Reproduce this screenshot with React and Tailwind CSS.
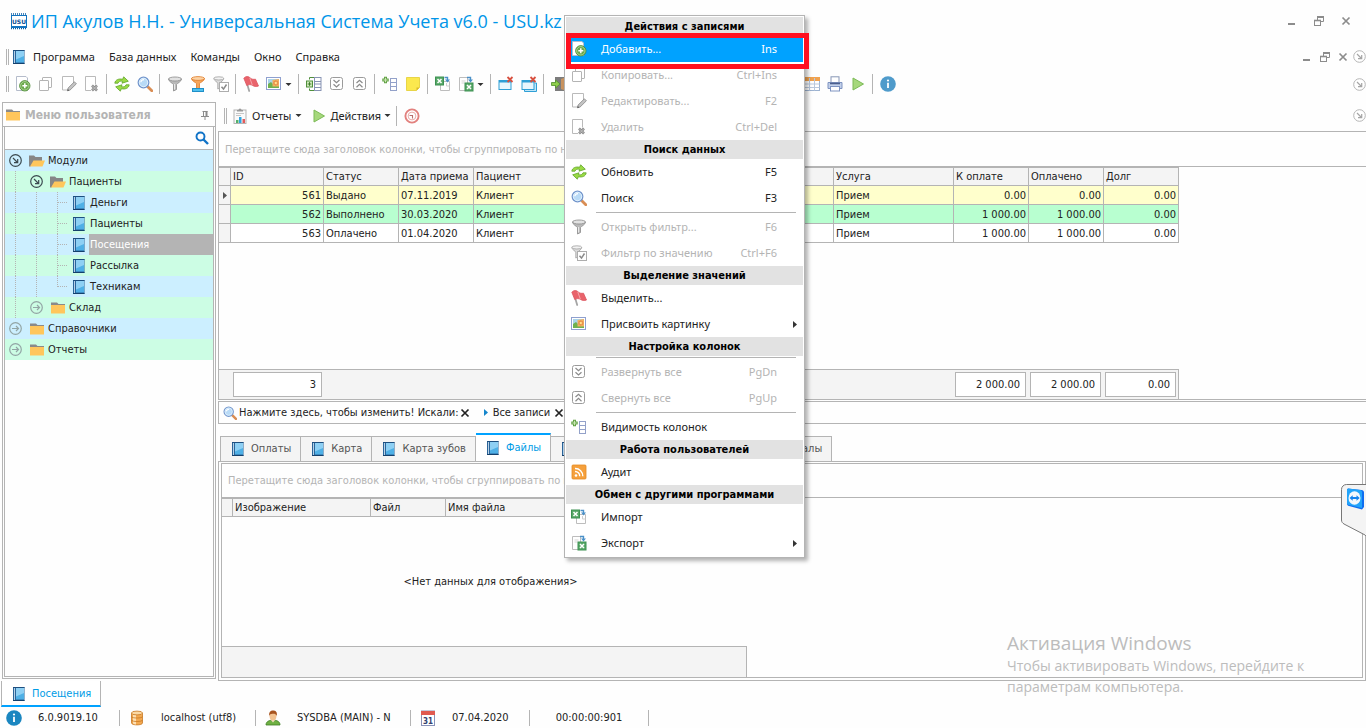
import React from "react";

/* ---------- icons (16px grid) ---------- */

function Svg({ children, size = 16, box = 16, className = "" }) {
  return (
    <svg width={size} height={size} viewBox={`0 0 ${box} ${box}`} fill="none" aria-hidden="true" className={`shrink-0 ${className}`}>
      {children}
    </svg>
  );
}

const BookIcon = ({ size = 16 }) => (
  <Svg size={size}>
    <path d="M2 1h11.500v14H2z" fill="#2a6499" />
    <path d="M5 2h8v11.500H5z" fill="#4fb0e6" />
    <path d="M5 2h8v5l-8 3.500z" fill="#8ed0f4" />
    <path d="M3.500 2v12" stroke="#b8d2e8" />
    <path d="M2 14.500h11.500" stroke="#14406c" />
    <path d="M2 1.500h11.500" stroke="#1d4f80" />
  </Svg>
);

const AddIcon = () => (
  <Svg>
    <path d="M1.500 .5h9.500l1.500 1.500v12.500h-11z" fill="#fff" stroke="#b5bccb" />
    <circle cx="9.800" cy="9.800" r="5.200" fill="#6aa84a" stroke="#4b8a32" strokeWidth=".8" />
    <circle cx="9.800" cy="9.800" r="4.200" stroke="#b9dda2" strokeWidth=".8" />
    <path d="M9.800 7.300v5M7.300 9.800h5" stroke="#fff" strokeWidth="1.500" />
  </Svg>
);

const CopyIcon = () => (
  <Svg>
    <rect x="4.500" y="1.500" width="9" height="10" rx=".5" fill="#fff" stroke="#b4b4b4" />
    <rect x="1.500" y="4.500" width="9" height="10" rx=".5" fill="#fff" stroke="#b4b4b4" />
  </Svg>
);

const EditIcon = () => (
  <Svg>
    <path d="M1.500 .5h11v9l-5 4.500h-6z" fill="#fff" stroke="#bababa" />
    <path d="M6.500 14.800l.6-2.800 6.300-6.200 2 2-6.400 6.300z" fill="#c4c4c4" stroke="#858585" strokeWidth=".8" />
    <path d="M6.400 15l1.800-.6-1.300-1.300z" fill="#555" />
  </Svg>
);

const DeleteIcon = () => (
  <Svg>
    <path d="M1.500 .5h10v8M7 14.500H1.500V.5" fill="#fff" stroke="#bababa" />
    <path d="M8 9.500l5 5M13 9.500l-5 5" stroke="#8c8c8c" strokeWidth="2.600" />
    <path d="M8.300 9.800l4.500 4.500M12.800 9.800l-4.500 4.500" stroke="#d5d5d5" strokeWidth=".7" />
  </Svg>
);

const RefreshIcon = () => (
  <Svg>
    <path d="M.8 7.200C1.300 3.600 5 2.400 8.600 3.300L9.700.8l4.600 4.400-6.300 2 .6-1.800C6.400 4.700 4.700 5.200 4 7.200z" fill="#9bdb45" stroke="#5fa52a" strokeWidth=".8" strokeLinejoin="round" />
    <path d="M15.200 8.800c-.5 3.600-4.200 4.800-7.800 3.900l-1.100 2.500-4.600-4.400 6.300-2-.6 1.800c2.200.7 3.900.2 4.600-1.800z" fill="#9bdb45" stroke="#5fa52a" strokeWidth=".8" strokeLinejoin="round" />
  </Svg>
);

const SearchIcon = ({ size = 16 }) => (
  <Svg size={size}>
    <path d="M10.800 10.800l4 4" stroke="#d98d54" strokeWidth="2.800" strokeLinecap="round" />
    <circle cx="6.500" cy="6.500" r="5.300" fill="#b8daf6" stroke="#7396cc" strokeWidth="1.300" />
    <circle cx="6.500" cy="6.500" r="4.200" stroke="#eaf5fd" strokeWidth=".8" />
    <path d="M3.800 6.200C4 4.500 5.300 3.700 7 3.600" stroke="#fff" strokeWidth="1.200" />
  </Svg>
);

const FunnelIcon = () => (
  <Svg>
    <path d="M1.500 3c0 2.500 4.500 4.500 5 5.500v6.500l3-1.500v-5c.5-1 5-3 5-5.500z" fill="#b9b9b9" stroke="#8a8a8a" strokeWidth=".8" />
    <ellipse cx="8" cy="3" rx="6.500" ry="2" fill="#e2e2e2" stroke="#8a8a8a" strokeWidth=".8" />
    <path d="M7.600 8v5.500" stroke="#eee" />
  </Svg>
);

const FunnelOrangeIcon = () => (
  <Svg>
    <path d="M1.500 2.500c0 2.500 4.500 4 5 5v5h3v-5c.5-1 5-2.500 5-5z" fill="#f6a55a" stroke="#e07b28" strokeWidth=".8" />
    <ellipse cx="8" cy="2.500" rx="6.500" ry="1.900" fill="#fcd3a5" stroke="#e07b28" strokeWidth=".8" />
    <rect x="2.500" y="12.500" width="11" height="3" fill="#4fc0ee" stroke="#1f8fc8" />
  </Svg>
);

const FunnelCheckIcon = () => (
  <Svg>
    <path d="M.8 2.500c0 2 3.500 3.500 4 4.500v6l2-1v-5c.5-1 4-2.500 4-4.500z" fill="#dcdcdc" stroke="#a0a0a0" strokeWidth=".8" />
    <ellipse cx="5.800" cy="2.400" rx="5" ry="1.600" fill="#f2f2f2" stroke="#a0a0a0" strokeWidth=".8" />
    <rect x="6.500" y="6.500" width="9" height="9" fill="#fff" stroke="#adadad" />
    <path d="M8.500 10.800l2 2.300 3-4.600" stroke="#8a8a8a" strokeWidth="1.500" />
  </Svg>
);

const FlagIcon = () => (
  <Svg>
    <path d="M3.600 6l2.600 9" stroke="#a5a5a5" strokeWidth="1.800" strokeLinecap="round" />
    <path d="M.8 2.200C3-.2 5.500.4 7 1.800c1.500 1.400 3.500 1.800 5.500 1.400L15.500 10c-2.500 1-4.500.4-6-.6-1.600-1-3.600-1.200-5.700.2z" fill="#e9636b" stroke="#dc5660" strokeWidth=".8" strokeLinejoin="round" />
    <path d="M6.800 2l2.500 7" stroke="#f5a5aa" strokeWidth="1" />
  </Svg>
);

const ImageIcon = () => (
  <Svg>
    <rect x=".5" y="1.500" width="14" height="12" fill="#fff" stroke="#8fa0cf" />
    <rect x="2" y="3" width="11" height="9" fill="#a8d4ea" />
    <path d="M2 12V8l3-2 3 3 2-1 3 2v2z" fill="#6fb04e" />
    <path d="M6.500 10.500V4l6.500-1v7.500z" fill="#f0b060" />
    <path d="M9.800 4.500v5M7.300 7h5M8 5.200l3.500 3.500M11.500 5.200L8 8.700" stroke="#df6a35" strokeWidth=".8" />
    <circle cx="9.800" cy="7" r="1.200" fill="#ffe08a" />
  </Svg>
);

const ExpandTableIcon = () => (
  <Svg>
    <path d="M3.500 3.500v-2h5M3.500 12.500v2h5" stroke="#4f8f3a" />
    <rect x=".5" y="5" width="6" height="6" fill="#cfe8bb" stroke="#4f8f3a" />
    <path d="M3.500 6.200v3.600M1.700 8h3.600" stroke="#3b7a26" />
    <rect x="8.500" y="1.500" width="6.500" height="13" fill="#fff" stroke="#8793b3" />
    <path d="M8.500 5.500H15M8.500 8H15M8.500 11.500H15" stroke="#8793b3" />
  </Svg>
);

const ExpandAllIcon = () => (
  <Svg>
    <rect x="1.500" y="1.500" width="12" height="12" rx="2" fill="#fff" stroke="#9b9b9b" />
    <path d="M4.500 4l3 2.800 3-2.800M4.500 8.200l3 2.800 3-2.800" stroke="#8a8a8a" strokeWidth="1.200" />
  </Svg>
);

const CollapseAllIcon = () => (
  <Svg>
    <rect x="1.500" y="1.500" width="12" height="12" rx="2" fill="#fff" stroke="#9b9b9b" />
    <path d="M4.500 7l3-2.800 3 2.800M4.500 11.200l3-2.800 3 2.800" stroke="#8a8a8a" strokeWidth="1.200" />
  </Svg>
);

const ColumnsIcon = () => (
  <Svg>
    <path d="M3.500 .8v6.400M.3 4h6.400" stroke="#5f9f42" strokeWidth="3" />
    <path d="M3.500 1.800v4.400M1.300 4h4.400" stroke="#c9e6b3" strokeWidth="1.200" />
    <rect x="8.500" y="2.500" width="6" height="12" fill="#fff" stroke="#93a1c9" />
    <path d="M8.500 6.500h6M8.500 10.500h6" stroke="#93a1c9" />
  </Svg>
);

const NoteIcon = () => (
  <Svg>
    <path d="M1.500 1.500h13v10l-3 3h-10z" fill="#fbe84e" stroke="#e8d548" />
    <path d="M14.500 11.500h-3v3z" fill="#d9b82a" />
  </Svg>
);

const ImportIcon = () => (
  <Svg>
    <path d="M5.500 5.500h9v9h-9z" fill="#fff" stroke="#bdbdbd" />
    <path d="M11.500 7v3h3" stroke="#cfcfcf" />
    <rect x=".5" y="1" width="8" height="8" fill="#58a868" stroke="#3d9152" />
    <path d="M2.500 3l4 4M6.500 3l-4 4" stroke="#fff" strokeWidth="1.500" />
    <path d="M9.500 1.500h3v2.500" stroke="#4a90c8" strokeWidth="1.400" />
    <path d="M10 3.500h5L12.500 6.500z" fill="#4a90c8" />
  </Svg>
);

const ExportIcon = () => (
  <Svg>
    <path d="M1.500 1.500h8v13h-8z" fill="#fff" stroke="#bdbdbd" />
    <path d="M3.500 5h4M3.500 7h3" stroke="#d5d5d5" />
    <rect x="7" y="7" width="8" height="8" fill="#58a868" stroke="#3d9152" />
    <path d="M9 9l4 4M13 9l-4 4" stroke="#fff" strokeWidth="1.500" />
    <path d="M9 1.500h3.500V4" stroke="#4a90c8" strokeWidth="1.400" />
    <path d="M10 3.500h5L12.500 6.500z" fill="#4a90c8" />
  </Svg>
);

const CloseWindowIcon = ({ many = false }) => (
  <Svg>
    {many && <path d="M3.500 12v3.500h12V7h-2" fill="#bfe6f8" stroke="#2f9fd6" />}
    <rect x="1" y="4.500" width="12" height="9" fill="#e8f6fd" stroke="#2f9fd6" />
    <path d="M1 5.500h12" stroke="#2f9fd6" strokeWidth="2" />
    <path d="M9.500 1l5 5M14.500 1l-5 5" stroke="#d8503f" strokeWidth="1.800" />
  </Svg>
);

const DoorIcon = () => (
  <Svg>
    <rect x="4" y="1" width="11" height="14" fill="#7c7c7c" />
    <path d="M10 3l5-2v14l-5-2z" fill="#c99360" />
    <path d="M.5 6.500h4v-2.500l4.500 4-4.500 4v-2.500h-4z" fill="#8fce4b" stroke="#4f8f2c" strokeWidth=".8" />
  </Svg>
);

const TableIcon = () => (
  <Svg>
    <rect x=".5" y="1.500" width="15" height="13" fill="#fff" stroke="#9db3d1" />
    <rect x="0" y="1" width="16" height="4" fill="#f0a24f" />
    <path d="M.5 8h15M.5 11.500h15M5.500 2v12.500M10.500 2v12.500" stroke="#b9c8dd" />
  </Svg>
);

const PrinterIcon = () => (
  <Svg>
    <rect x="4" y=".8" width="8" height="6" fill="#fff" stroke="#8796b5" />
    <path d="M1 6.500h14v6H1z" fill="#c2d0ea" stroke="#7e93c0" />
    <path d="M3 7.500h10" stroke="#4c5f8d" strokeWidth="1.600" />
    <rect x="3.500" y="10.500" width="9" height="4.500" fill="#fff" stroke="#7e93c0" />
  </Svg>
);

const PlayIcon = () => (
  <Svg>
    <path d="M3 2l10.500 6L3 14z" fill="#a6d87c" stroke="#7cba57" strokeLinejoin="round" />
  </Svg>
);

const InfoIcon = ({ color = "#4f9bcb" }) => (
  <Svg>
    <circle cx="8" cy="8" r="7.800" fill={color} />
    <circle cx="8" cy="4.500" r="1.100" fill="#fff" />
    <path d="M8 6.800v5.200" stroke="#fff" strokeWidth="1.800" />
  </Svg>
);

const RssIcon = () => (
  <Svg>
    <rect x="1" y="1" width="14" height="14" rx="1" fill="#f5a03c" stroke="#e58a22" strokeWidth=".8" />
    <circle cx="5" cy="11.500" r="1.300" fill="#fff" />
    <path d="M4 7.500a4.500 4.500 0 0 1 4.700 4.800M4 4.500a7.500 7.500 0 0 1 7.800 7.800" stroke="#fff" strokeWidth="1.400" />
  </Svg>
);

const ReportIcon = () => (
  <Svg>
    <rect x="2" y="2" width="12" height="13.500" fill="#fafafa" stroke="#b3b3b3" />
    <path d="M5 3.500V2h1.500a1.500 1.500 0 0 1 3 0H11v1.500z" fill="#9a9a9a" />
    <path d="M4 5.500h8M4 7.500h5" stroke="#c6c6c6" />
    <path d="M4 12h2.500v3H4z" fill="#55b06a" />
    <path d="M7 9h2.500v6H7z" fill="#2fa5df" />
    <path d="M10.500 11H13v4h-2.500z" fill="#e35c5c" />
  </Svg>
);

const ClockIcon = () => (
  <Svg>
    <circle cx="8" cy="8" r="6.600" fill="#fff" stroke="#e2817e" strokeWidth="1.900" />
    <circle cx="8" cy="8" r="3.900" stroke="#e8a29f" strokeWidth=".9" />
    <path d="M5.500 7.500h3v3" stroke="#b86e6c" strokeWidth="1.100" />
  </Svg>
);

const FolderIcon = () => (
  <Svg>
    <path d="M1 2.500h6L8.500 4H15v2.500H1z" fill="#8a8a8a" />
    <path d="M1 5h14v8.500H1z" fill="#ffc65c" />
  </Svg>
);

const FolderOpenIcon = () => (
  <Svg>
    <path d="M0 2.500h5L6.500 4H13v5H5l-3.500 4.500H0z" fill="#868686" />
    <path d="M4.500 7.500H16l-2.500 6H1z" fill="#ffc65c" />
  </Svg>
);

const PinIcon = () => (
  <Svg size={10} box={10}>
    <path d="M2.500 1.500h5M3.500 1v5M1 6.500h8M5 6.500V10" stroke="#8c8c8c" />
    <path d="M6.500 1v5" stroke="#8c8c8c" strokeWidth="2" />
  </Svg>
);

const DatabaseIcon = () => (
  <Svg>
    <path d="M2.500 3v10c0 2.500 11 2.500 11 0V3z" fill="#f3a951" stroke="#c87a26" strokeWidth=".8" />
    <path d="M4 4v9.500c1 .6 2 .8 3 .9V5z" fill="#fde0b3" />
    <ellipse cx="8" cy="3" rx="5.500" ry="1.900" fill="#fbd9a4" stroke="#c87a26" strokeWidth=".8" />
    <path d="M2.500 6.500c0 2 11 2 11 0M2.500 10c0 2 11 2 11 0" stroke="#c87a26" strokeWidth=".8" />
  </Svg>
);

const UserIcon = () => (
  <Svg>
    <path d="M1 15c0-3.500 3-4.800 7-4.800s7 1.300 7 4.800z" fill="#6fb043" stroke="#3f7f24" strokeWidth=".8" />
    <path d="M6 10l2 2.500L10 10z" fill="#f7e0c4" />
    <ellipse cx="8" cy="6.200" rx="3.400" ry="4.200" fill="#f3c391" />
    <path d="M4.200 6C3.800 2 5.500.6 8 .6s4.500 1.200 3.800 5.400C11 4 9.500 3.600 7.500 3.800 5.500 4 4.800 4.500 4.200 6z" fill="#a8541f" />
  </Svg>
);

const CalendarIcon = () => (
  <svg width="16" height="16" viewBox="0 0 16 16" aria-hidden="true" className="shrink-0">
    <rect x="1.500" y="1" width="13" height="14.500" fill="#fff" stroke="#8b93b8" />
    <rect x="1" y="1" width="14" height="4" fill="#e05a50" />
    <text x="8" y="13.500" textAnchor="middle" fontSize="8" fontWeight="700" fontFamily="DejaVu Sans Condensed" fill="#333f70">31</text>
  </svg>
);

const LogoIcon = () => (
  <svg width="16" height="17" viewBox="0 0 16 17" aria-hidden="true" className="shrink-0">
    <path d="M0 1h16M0 15.500h16" stroke="#0b5fa8" strokeWidth="1.500" strokeDasharray="1 1" />
    <rect x="0" y="2" width="16" height="13" fill="#1273bf" />
    <rect x="1" y="3" width="14" height="10" fill="#fff" />
    <text x="8" y="10.500" textAnchor="middle" fontSize="6" fontWeight="700" fontFamily="DejaVu Sans" fill="#0b4f95">USU</text>
  </svg>
);

const ToggleIcon = ({ open }) => (
  <Svg size={13} box={13}>
    <circle cx="6.500" cy="6.500" r="5.800" stroke={open ? "#3c4a50" : "#93a5a5"} strokeWidth="1.200" />
    {open ? (
      <path d="M4 4l4.500 4.500M8.700 5v3.700H5" stroke="#3c4a50" strokeWidth="1.200" />
    ) : (
      <path d="M3 6.500h6.500M7 4l2.500 2.500L7 9" stroke="#93a5a5" strokeWidth="1.200" />
    )}
  </Svg>
);

const CornerIcon = () => (
  <Svg size={13} box={13}>
    <circle cx="6.500" cy="6.500" r="5.800" fill="#fff" stroke="#b5b5b5" />
    <path d="M4 4l4.500 4.500M8.700 5v3.700H5" stroke="#a5a5a5" strokeWidth="1.200" />
  </Svg>
);

const MinimizeIcon = () => (
  <Svg size={10} box={10}>
    <path d="M1 8h7" stroke="#8c8c8c" strokeWidth="2" />
  </Svg>
);
const RestoreIcon = () => (
  <Svg size={10} box={10}>
    <path d="M3.500 4V1M9.500 1v4.500H7" stroke="#8c8c8c" />
    <path d="M3 1h7" stroke="#8c8c8c" strokeWidth="2" />
    <rect x=".5" y="4.500" width="6" height="5" fill="#fefefe" stroke="#8c8c8c" />
    <path d="M0 4.500h7" stroke="#8c8c8c" strokeWidth="1.600" />
  </Svg>
);
const CrossIcon = ({ color = "#8c8c8c" }) => (
  <Svg size={10} box={10}>
    <path d="M1.500 1.500l7 7M8.500 1.500l-7 7" stroke={color} strokeWidth="1.700" />
  </Svg>
);

const Arrow = ({ dir = "down", color = "#333" }) => (
  <Svg size={7} box={7}>
    <path d={dir === "down" ? "M.5 2h6L3.500 5z" : "M2 0v7L6 3.500z"} fill={color} />
  </Svg>
);

/* ---------- small parts ---------- */

const Grip = () => <span className="mr-[2px] h-4 w-[3px] shrink-0 border-x border-[#b4b4b4]" />;
const Divider = () => (
  <span className="flex w-[7px] shrink-0 justify-center">
    <span className="h-5 w-px bg-[#b4b4b4]" />
  </span>
);
const Tool = ({ label, children }) => (
  <button type="button" aria-label={label} className="flex h-6 w-[23px] shrink-0 items-center justify-center">
    {children}
  </button>
);
const DropTool = ({ label, children }) => (
  <button type="button" aria-label={label} className="flex h-6 w-[33px] shrink-0 items-center justify-center gap-[3px]">
    {children}
    <Arrow />
  </button>
);
const WindowButtons = ({ gap }) => (
  <span className={`flex items-center ${gap}`}>
    <button type="button" aria-label="Свернуть окно"><MinimizeIcon /></button>
    <button type="button" aria-label="Восстановить окно"><RestoreIcon /></button>
    <button type="button" aria-label="Закрыть окно"><CrossIcon /></button>
  </span>
);
const CornerButton = () => (
  <button type="button" aria-label="Настройка панели" className="shrink-0"><CornerIcon /></button>
);

/* ---------- toolbar ---------- */

const Toolbar = () => (
  <div className="flex h-7 shrink-0 items-center pl-[6px]">
    <Grip />
    <Tool label="Добавить"><AddIcon /></Tool>
    <Tool label="Копировать"><CopyIcon /></Tool>
    <Tool label="Редактировать"><EditIcon /></Tool>
    <Tool label="Удалить"><DeleteIcon /></Tool>
    <Divider />
    <Tool label="Обновить"><RefreshIcon /></Tool>
    <Tool label="Поиск"><SearchIcon /></Tool>
    <Divider />
    <Tool label="Фильтр"><FunnelIcon /></Tool>
    <Tool label="Сбросить фильтр"><FunnelOrangeIcon /></Tool>
    <Tool label="Фильтр по значению"><FunnelCheckIcon /></Tool>
    <Divider />
    <Tool label="Выделить"><FlagIcon /></Tool>
    <DropTool label="Присвоить картинку"><ImageIcon /></DropTool>
    <Divider />
    <Tool label="Группы"><ExpandTableIcon /></Tool>
    <Tool label="Развернуть все"><ExpandAllIcon /></Tool>
    <Tool label="Свернуть все"><CollapseAllIcon /></Tool>
    <Divider />
    <Tool label="Видимость колонок"><ColumnsIcon /></Tool>
    <Tool label="Заметка"><NoteIcon /></Tool>
    <Divider />
    <Tool label="Импорт"><ImportIcon /></Tool>
    <DropTool label="Экспорт"><ExportIcon /></DropTool>
    <Divider />
    <Tool label="Закрыть"><CloseWindowIcon /></Tool>
    <Tool label="Закрыть все"><CloseWindowIcon many /></Tool>
    <Divider />
    <Tool label="Выход"><DoorIcon /></Tool>
    <span className="w-[230px] shrink-0" />
    <Tool label="Таблица"><TableIcon /></Tool>
    <Tool label="Печать"><PrinterIcon /></Tool>
    <Tool label="Выполнить"><PlayIcon /></Tool>
    <Divider />
    <Tool label="О программе"><InfoIcon /></Tool>
    <span className="grow" />
    <CornerButton />
  </div>
);

/* ---------- sidebar ---------- */

const tree = [
  { level: 0, label: "Модули", kind: "open" },
  { level: 1, label: "Пациенты", kind: "open" },
  { level: 2, label: "Деньги", kind: "leaf" },
  { level: 2, label: "Пациенты", kind: "leaf" },
  { level: 2, label: "Посещения", kind: "leaf", selected: true },
  { level: 2, label: "Рассылка", kind: "leaf" },
  { level: 2, label: "Техникам", kind: "leaf", last: true },
  { level: 1, label: "Склад", kind: "closed", last: true },
  { level: 0, label: "Справочники", kind: "closed" },
  { level: 0, label: "Отчеты", kind: "closed" },
];

const Guide = ({ branch = false, half = false }) => (
  <svg width="21" height="21" viewBox="0 0 21 21" className="shrink-0" aria-hidden="true">
    <path d={half ? "M10.500 0V11" : "M10.500 0V21"} stroke="#b4b4b4" strokeDasharray="1 1" />
    {branch && <path d="M11 10.500H21" stroke="#b4b4b4" strokeDasharray="1 1" />}
  </svg>
);

const TreeRow = ({ node }) => (
  <li className="flex h-[21px] items-center odd:bg-[#ccefff] even:bg-[#ccfde4]">
    {node.level > 0 && <Guide />}
    {node.level > 1 && <Guide />}
    {node.kind === "leaf" ? (
      <Guide branch half={node.last} />
    ) : (
      <button type="button" aria-label={node.label} className="flex w-[21px] shrink-0 justify-center">
        <ToggleIcon open={node.kind === "open"} />
      </button>
    )}
    <span className="flex w-[21px] shrink-0 justify-center">
      {node.kind === "leaf" ? <BookIcon /> : node.kind === "open" ? <FolderOpenIcon /> : <FolderIcon />}
    </span>
    <a href="#" className={`flex h-full grow items-center pl-px ${node.selected ? "bg-[#b4b4b4] text-white" : ""}`}>
      {node.label}
    </a>
  </li>
);

const Sidebar = () => (
  <aside className="mb-[2px] ml-[2px] flex w-[214px] shrink-0 flex-col border border-[#b4b4b4]">
    <header className="flex h-6 shrink-0 items-center gap-1 border-b border-[#b4b4b4] pl-[2px] pr-[5px]">
      <FolderIcon />
      <h2 className="grow text-[12px] font-bold text-[#b4b4b4]">Меню пользователя</h2>
      <button type="button" aria-label="Закрепить"><PinIcon /></button>
    </header>
    <div className="m-px mt-0 flex grow flex-col border border-t-0 border-[#b4b4b4]">
      <label className="flex h-[23px] shrink-0 items-center border-b border-[#b4b4b4] pr-1">
        <input aria-label="Поиск по меню" className="min-w-0 grow outline-none" />
        <Svg size={14} box={14}>
          <circle cx="5.500" cy="5.500" r="4" stroke="#1173c7" strokeWidth="1.900" />
          <path d="M8.500 8.500l4.500 4.500" stroke="#1173c7" strokeWidth="2.400" />
        </Svg>
      </label>
      <ul>{tree.map((n, i) => <TreeRow key={i} node={n} />)}</ul>
    </div>
  </aside>
);

/* ---------- visits grid ---------- */

const visits = [
  { id: "561", status: "Выдано", date: "07.11.2019", due: "0.00", paid: "0.00", debt: "0.00", bg: "bg-[#ffffcc]" },
  { id: "562", status: "Выполнено", date: "30.03.2020", due: "1 000.00", paid: "1 000.00", debt: "0.00", bg: "bg-[#b8ffd0]" },
  { id: "563", status: "Оплачено", date: "01.04.2020", due: "1 000.00", paid: "1 000.00", debt: "0.00", bg: "bg-white" },
];

const cell = "truncate border-b border-r border-[#b4b4b4] font-normal";
const headCell = `${cell} h-[18px] px-[2px] pt-px`;
const bodyCell = `${cell} h-[19px] px-[2px] pt-px`;

const VisitsTable = () => (
  <table className="w-[960px] table-fixed border-separate border-spacing-0 border-t border-[#b4b4b4]">
    <colgroup>
      <col className="w-[12px]" />
      <col className="w-[93px]" />
      <col className="w-[75px]" />
      <col className="w-[75px]" />
      <col />
      <col className="w-[120px]" />
      <col className="w-[75px]" />
      <col className="w-[75px]" />
      <col className="w-[75px]" />
    </colgroup>
    <thead className="bg-[#f4f4f4] text-left">
      <tr>
        {["", "ID", "Статус", "Дата приема", "Пациент", "Услуга", "К оплате", "Оплачено", "Долг"].map((h) => (
          <th key={h} scope="col" className={headCell}>{h}</th>
        ))}
      </tr>
    </thead>
    <tbody>
      {visits.map((v, i) => (
        <tr key={v.id} className={v.bg}>
          <td className="border-b border-r border-[#b4b4b4] bg-[#f4f4f4] pl-[2px]">{i === 0 && <Arrow dir="right" color="#555" />}</td>
          <td className={`${bodyCell} text-right`}>{v.id}</td>
          <td className={bodyCell}>{v.status}</td>
          <td className={bodyCell}>{v.date}</td>
          <td className={bodyCell}>Клиент</td>
          <td className={bodyCell}>Прием</td>
          <td className={`${bodyCell} text-right`}>{v.due}</td>
          <td className={`${bodyCell} text-right`}>{v.paid}</td>
          <td className={`${bodyCell} text-right`}>{v.debt}</td>
        </tr>
      ))}
    </tbody>
  </table>
);

const Total = ({ children, width }) => (
  <output className={`flex h-[25px] items-center justify-end border border-[#b4b4b4] bg-white pr-[5px] ${width}`}>{children}</output>
);

const GroupHint = ({ size }) => (
  <p className={`flex shrink-0 items-center whitespace-nowrap border-b border-[#b4b4b4] pl-[6px] text-[#b4b4b4] ${size}`}>
    Перетащите сюда заголовок колонки, чтобы сгруппировать по ней
  </p>
);

const Tab = ({ label, active }) => (
  <button
    type="button"
    role="tab"
    aria-selected={!!active}
    className={`flex items-center gap-[5px] border-r border-[#b4b4b4] px-[9px] ${
      active ? "h-7 border-t-2 border-t-[#00a2ff] bg-white text-[#009ce6]" : "h-[25px] border-t bg-[#f4f4f4] text-[#555]"
    }`}
  >
    <BookIcon />
    {label}
  </button>
);

const Content = () => (
  <main className="ml-[2px] flex min-w-0 grow flex-col">
    <div className="mb-[2px] flex h-[27px] shrink-0 items-center pl-[6px] font-['Noto_Sans']">
      <Grip />
      <button type="button" className="ml-[2px] flex items-center gap-1 px-px"><ReportIcon />Отчеты <Arrow /></button>
      <button type="button" className="ml-2 flex items-center gap-[3px]"><PlayIcon />Действия <Arrow /></button>
      <span className="w-[2px]" />
      <Divider />
      <Tool label="История"><ClockIcon /></Tool>
      <span className="grow" />
      <CornerButton />
    </div>

    <section aria-label="Посещения" className="flex h-[269px] shrink-0 flex-col border border-r-0 border-[#b4b4b4]">
      <GroupHint size="h-[35px] pt-[2px]" />
      <VisitsTable />
      <div className="grow" />
      <div className="flex h-[30px] w-[960px] items-center border-r border-t border-[#b4b4b4] bg-[#f4f4f4] pl-[14px] pr-[2px]">
        <Total width="w-[89px]">3</Total>
        <span className="grow" />
        <span className="flex gap-1">
          <Total width="w-[71px]">2 000.00</Total>
          <Total width="w-[71px]">2 000.00</Total>
          <Total width="w-[71px]">0.00</Total>
        </span>
      </div>
    </section>

    <div className="mt-px flex h-[23px] shrink-0 items-center border border-r-0 border-[#b4b4b4] pl-1">
      <SearchIcon size={14} />
      <button type="button" className="ml-[2px]">Нажмите здесь, чтобы изменить! Искали:</button>
      <button type="button" aria-label="Очистить поиск" className="ml-px"><CrossIcon color="#222" /></button>
      <span className="ml-3 mr-1"><Arrow dir="right" color="#1586cc" /></span>
      <span>Все записи</span>
      <button type="button" aria-label="Убрать условие" className="ml-1"><CrossIcon color="#222" /></button>
    </div>

    <div role="tablist" className="mt-[9px] flex h-7 shrink-0 items-end pl-[2px]">
      <span className="h-[25px] w-px bg-[#b4b4b4]" />
      <Tab label="Оплаты" />
      <Tab label="Карта" />
      <Tab label="Карта зубов" />
      <Tab label="Файлы" active />
      <Tab label="Снимки" />
      <Tab label="Назначения" />
      <Tab label="Материалы" />
    </div>

    <section aria-label="Файлы" className="flex min-h-0 grow border border-[#b4b4b4]">
      <div className="m-[2px] mt-px flex min-w-0 grow flex-col border border-[#b4b4b4]">
        <GroupHint size="h-[34px] pt-px" />
        <table className="w-[525px] table-fixed border-separate border-spacing-0 border-t border-[#b4b4b4]">
          <colgroup>
            <col className="w-[11px]" />
            <col className="w-[138px]" />
            <col className="w-[75px]" />
            <col />
          </colgroup>
          <thead className="bg-[#f4f4f4] text-left">
            <tr>
              {["", "Изображение", "Файл", "Имя файла"].map((h) => (
                <th key={h} scope="col" className={headCell}>{h}</th>
              ))}
            </tr>
          </thead>
        </table>
        <p className="flex w-[537px] grow items-center justify-center">&lt;Нет данных для отображения&gt;</p>
        <div className="h-[31px] w-[525px] border-r border-t border-[#b4b4b4] bg-[#f4f4f4]" />
      </div>
    </section>
  </main>
);

/* ---------- context menu ---------- */

const menu = [
  { head: "Действия с записями" },
  { label: "Добавить...", keys: "Ins", icon: <AddIcon />, hot: true },
  { label: "Копировать...", keys: "Ctrl+Ins", icon: <CopyIcon />, off: true },
  { label: "Редактировать...", keys: "F2", icon: <EditIcon />, off: true },
  { label: "Удалить", keys: "Ctrl+Del", icon: <DeleteIcon />, off: true },
  { head: "Поиск данных" },
  { label: "Обновить", keys: "F5", icon: <RefreshIcon /> },
  { label: "Поиск", keys: "F3", icon: <SearchIcon /> },
  { line: true },
  { label: "Открыть фильтр...", keys: "F6", icon: <FunnelIcon />, off: true },
  { label: "Фильтр по значению", keys: "Ctrl+F6", icon: <FunnelCheckIcon />, off: true },
  { head: "Выделение значений" },
  { label: "Выделить...", icon: <FlagIcon /> },
  { label: "Присвоить картинку", icon: <ImageIcon />, sub: true },
  { head: "Настройка колонок" },
  { line: true },
  { label: "Развернуть все", keys: "PgDn", icon: <ExpandAllIcon />, off: true },
  { label: "Свернуть все", keys: "PgUp", icon: <CollapseAllIcon />, off: true },
  { line: true },
  { label: "Видимость колонок", icon: <ColumnsIcon /> },
  { head: "Работа пользователей" },
  { label: "Аудит", icon: <RssIcon /> },
  { head: "Обмен с другими программами" },
  { label: "Импорт", icon: <ImportIcon /> },
  { label: "Экспорт", icon: <ExportIcon />, sub: true },
];

const ContextMenu = () => (
  <div role="menu" className="absolute left-[564px] top-[15px] w-[241px] border border-[#b4b4b4] bg-white p-px text-[#222] shadow-[3px_3px_4px_rgba(0,0,0,0.3)]">
    {menu.map((m, i) => {
      if (m.head) return <div key={i} className="flex h-[19px] items-center justify-center bg-[#e2e2e2] font-bold text-black">{m.head}</div>;
      if (m.line) return <div key={i} role="separator" className="ml-[30px] mr-[7px] flex h-[3px] items-center"><span className="h-px grow bg-[#b4b4b4]" /></div>;
      return (
        <button
          key={i}
          type="button"
          role="menuitem"
          disabled={m.off}
          className={`flex h-[26px] w-full items-center pl-[5px] font-['Noto_Sans'] ${m.hot ? "bg-[#00a2ff] text-white" : ""} ${m.off ? "text-[#b4b4b4]" : ""}`}
        >
          {m.icon}
          <span className="ml-[14px] grow text-left">{m.label}</span>
          {m.keys && <span className="mr-[26px]">{m.keys}</span>}
          {m.sub && <span className="mr-[5px]"><Arrow dir="right" /></span>}
        </button>
      );
    })}
    <span className="pointer-events-none absolute left-px top-[17px] h-[36px] w-[243px] border-[5px] border-[#ff1020]" />
  </div>
);

/* ---------- status bar ---------- */

const status = [
  { icon: <InfoIcon color="#1a86c0" />, text: "6.0.9019.10", width: "w-[117px]", pad: "pl-[3px]" },
  { icon: <DatabaseIcon />, text: "localhost (utf8)", width: "w-[136px]", pad: "pl-[9px]" },
  { icon: <UserIcon />, text: "SYSDBA (MAIN) - N", width: "w-[155px]", pad: "pl-[9px]" },
  { icon: <CalendarIcon />, text: "07.04.2020", width: "w-[119px]", pad: "pl-[9px]" },
  { icon: null, text: "00:00:00:901", width: "w-[119px]", pad: "justify-center" },
];

const StatusBar = () => (
  <footer className="flex h-[21px] shrink-0 items-center pl-[3px] pt-px">
    {status.map((s) => (
      <span key={s.text} className={`flex h-4 shrink-0 items-center gap-4 whitespace-nowrap border-r border-[#b4b4b4] ${s.width} ${s.pad}`}>
        {s.icon}
        {s.text}
      </span>
    ))}
  </footer>
);

/* ---------- page ---------- */

export default function App() {
  return (
    <div className="relative flex h-screen flex-col overflow-hidden bg-[#fefefe] font-['DejaVu_Sans_Condensed','Noto_Sans',sans-serif] text-[11px] leading-4 text-[#222]">
      <header className="flex h-[42px] shrink-0 items-center gap-1 pl-[11px] pr-[15px]">
        <LogoIcon />
        <h1 className="grow truncate font-['Open_Sans'] text-[18px] leading-6 text-[#0095e8]">
          ИП Акулов Н.Н. - Универсальная Система Учета v6.0 - USU.kz - [Посещения]
        </h1>
        <WindowButtons gap="gap-[17px]" />
      </header>

      <nav className="flex h-7 shrink-0 items-center pl-[6px] pt-px font-['Noto_Sans']">
        <Grip />
        <BookIcon />
        <span className="ml-[6px] flex grow">
          {["Программа", "База данных", "Команды", "Окно", "Справка"].map((m) => (
            <button key={m} type="button" className="mr-[14px] last:mr-0">{m}</button>
          ))}
        </span>
        <WindowButtons gap="gap-2" />
        <span className="w-[5px]" />
        <CornerButton />
      </nav>

      <Toolbar />

      <div className="mt-1 flex min-h-0 grow">
        <Sidebar />
        <Content />
      </div>

      <div className="flex h-[26px] shrink-0 pl-px">
        <button type="button" className="flex items-center gap-[5px] border-b-2 border-l border-r border-b-[#00a2ff] border-l-[#b4b4b4] border-r-[#b4b4b4] bg-white px-[9px] pt-[2px] text-[#009ce6]">
          <BookIcon />
          Посещения
        </button>
      </div>

      <StatusBar />

      <div className="pointer-events-none absolute bottom-[31px] right-[57px] w-[302px] whitespace-nowrap font-['Open_Sans'] text-[14px] leading-[21px] text-[#bcbcbc]">
        <p className="text-[19px] leading-6">Активация Windows</p>
        <p>Чтобы активировать Windows, перейдите к</p>
        <p>параметрам компьютера.</p>
      </div>

      <button type="button" aria-label="TeamViewer" className="absolute right-0 top-[484px]">
        <svg width="25" height="52" viewBox="0 0 25 52" aria-hidden="true">
          <path d="M25 .5H5.500a5 5 0 0 0-5 5V36c0 2 1 3 2.500 4L25 51.500z" fill="#f4f4f4" stroke="#777" />
          <path d="M25 1v50" stroke="#f4f4f4" strokeWidth="2" />
          <path d="M7 4.500L20.500 6c1.500.2 2.500 1 2.500 2.500V23l-2 2.500L8 22c-1.200-.3-2-1-2-2.200V5.500z" fill="#0f6df0" />
          <path d="M7 4.500L19 6c1.500.2 2 1 2 2.500v15.500L8 21c-1.200-.2-2-.8-2-2V5.500z" fill="#22a4fa" />
          <ellipse cx="13.500" cy="14" rx="6" ry="6.800" fill="#f4f8fc" />
          <path d="M8.500 14l3.200-2.800v1.800h3.800v-1.800l3.200 2.800-3.200 2.800v-1.800h-3.800v1.800z" fill="#1583ee" />
        </svg>
      </button>

      <ContextMenu />
    </div>
  );
}
